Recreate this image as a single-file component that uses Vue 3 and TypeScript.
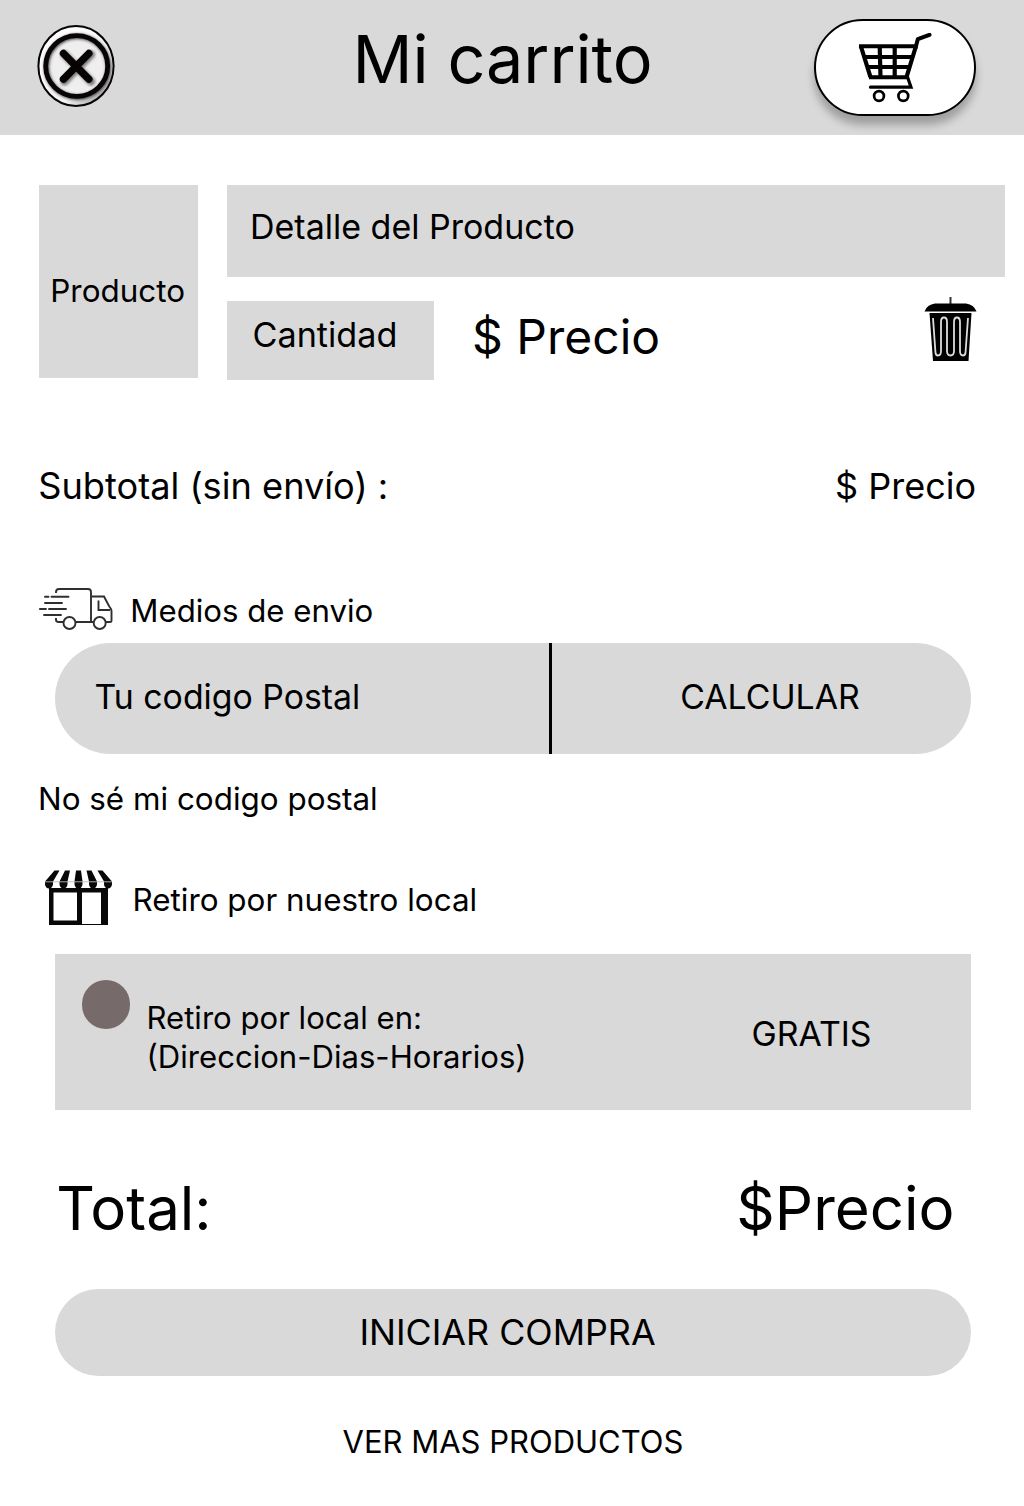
<script setup lang="ts">
interface CartItem {
  name: string
  detail: string
  quantity: string
  price: string
}

interface Stripe {
  top: number
  left: number
}

const item: CartItem = {
  name: 'Producto',
  detail: 'Detalle del Producto',
  quantity: 'Cantidad',
  price: '$ Precio',
}

// Slanted bands of the shop awning, each ending in a rounded lobe.
const stripes: Stripe[] = [
  { top: 9.5, left: 0 },
  { top: 20, left: 14.5 },
  { top: 31, left: 29.5 },
  { top: 41.5, left: 44 },
  { top: 52.5, left: 59 },
]

const band = ({ top, left }: Stripe): string =>
  `M${top} 1.500H${top + 5}L${left + 8} 12.500V15A4 4.500 0 0 1 ${left} 15V12.500Z`
</script>

<template>
  <main class="cart">
    <header class="bar">
      <button class="close" aria-label="Cerrar">
        <svg width="80" height="86" viewBox="0 0 80 86">
          <defs>
            <linearGradient id="rim" x1="0" y1="0" x2="1" y2="1">
              <stop offset="0.15" stop-color="#fff" />
              <stop offset="0.65" stop-color="#f4f4f4" />
              <stop offset="0.9" stop-color="#a5a5a5" />
            </linearGradient>
            <filter id="soft" x="-20%" y="-20%" width="140%" height="140%">
              <feGaussianBlur stdDeviation="1.6" />
            </filter>
          </defs>
          <ellipse cx="40" cy="43" rx="37.6" ry="40" fill="url(#rim)" stroke="#050505" stroke-width="2" />
          <ellipse cx="40.7" cy="43" rx="31" ry="31" fill="#efefef" />
          <ellipse cx="41.500" cy="44" rx="31" ry="30.500" fill="none" stroke="#444" stroke-width="5" filter="url(#soft)" />
          <ellipse cx="40.700" cy="43" rx="31" ry="30.300" fill="none" stroke="#0a0505" stroke-width="4.800" />
          <path d="M28.500 31.500L55 58.500M55 31.500L28.500 58.500" stroke="#777" stroke-width="8" stroke-linecap="round" filter="url(#soft)" />
          <path d="M27.500 30.500L52.800 56.200M52.800 30.500L27.500 56.200" stroke="#080303" stroke-width="7.400" stroke-linecap="round" />
        </svg>
      </button>
      <h1 class="title">Mi carrito</h1>
      <button class="basket" aria-label="Carrito">
        <svg width="76" height="74" viewBox="0 0 76 74" fill="none" stroke="#000">
          <path d="M1 13.300H59M5 24H55M8 34H52M11 44.200H50.500" stroke-width="4" />
          <path d="M2.800 13L12.500 44.200M21.700 13L22.500 44M36.700 13V44M58 13L48.500 44.200" stroke-width="4.200" />
          <path d="M57.500 15L59.800 6.200L71.500 1.800" stroke-width="4" stroke-linecap="round" stroke-linejoin="round" />
          <path d="M49.500 44L53 54.200H12.500" stroke-width="3.200" stroke-linecap="round" />
          <circle cx="21" cy="63" r="4.900" stroke-width="2.700" />
          <circle cx="45.300" cy="63" r="4.900" stroke-width="2.700" />
        </svg>
      </button>
    </header>

    <section class="item">
      <div class="thumb">{{ item.name }}</div>
      <div class="info">
        <div class="detail">{{ item.detail }}</div>
        <div class="line">
          <div class="qty">{{ item.quantity }}</div>
          <span class="price">{{ item.price }}</span>
          <button class="trash" aria-label="Eliminar">
            <svg width="54" height="66" viewBox="0 0 54 66" fill="none">
              <path d="M26.500 0V8" stroke="#333" stroke-width="2" />
              <path d="M0.500 14.500Q3 7.500 11 6.500H42Q50 7.500 52.500 14.500Z" fill="#000" />
              <path d="M5.500 16H47.500L44.500 64H9Z" fill="#000" />
              <path d="M9 21L11.500 56Q12 58.500 14 58.500Q17 58.500 17 54V25Q17 20.500 20 20.500Q23 20.500 23 25V54Q23 58.500 26.500 58.500Q30 58.500 30 54V25Q30 20.500 33 20.500Q36 20.500 36 25V54Q36 58.500 39 58.500Q41 58.500 41.500 56L44 21" stroke="#ddd" stroke-width="1.800" />
            </svg>
          </button>
        </div>
      </div>
    </section>

    <section class="subtotal">
      <span>Subtotal (sin envío) :</span>
      <span class="amount">$ Precio</span>
    </section>

    <section class="shipping">
      <div class="heading">
        <svg class="truck" width="76" height="44" viewBox="0 0 76 44" fill="none" stroke="#302e2f" stroke-width="1.900">
          <path d="M17 6V5Q17 2 20 2H49Q52 2 52 5V35M17 31V33Q17 35 20 35H24.500M37 35H54.500M53 9.500H65L70 19Q72.500 22 72.500 24V34Q72.500 35 71 35H67M59.500 13.500V23H71" />
          <circle cx="30.500" cy="36" r="6" />
          <circle cx="60.700" cy="36" r="6" />
          <path d="M6 9.800H9.500M12.500 9.800H29.500M6 16H23M0.800 22H7M10 22H27M5 28H22" stroke-linecap="round" />
        </svg>
        <span>Medios de envio</span>
      </div>
      <div class="postal">
        <span class="code">Tu codigo Postal</span>
        <button class="calc">CALCULAR</button>
      </div>
      <a class="unknown">No sé mi codigo postal</a>
    </section>

    <section class="pickup">
      <div class="heading store-heading">
        <svg class="store" width="68" height="58" viewBox="0 0 68 58">
          <path d="M4 19H63V56H4Z" fill="#080808" />
          <path d="M8.500 23.500H32V51.500H8.500ZM37 23.500H56V55H37Z" fill="#fff" />
          <path v-for="stripe in stripes" :key="stripe.left" :d="band(stripe)" fill="#080808" />
          <path d="M0 12.800H67" stroke="#bbb" stroke-width="0.900" />
        </svg>
        <span>Retiro por nuestro local</span>
      </div>
      <div class="option">
        <span class="radio"></span>
        <p class="place">Retiro por local en:<br />(Direccion-Dias-Horarios)</p>
        <span class="free">GRATIS</span>
      </div>
    </section>

    <section class="total">
      <span>Total:</span>
      <span>$Precio</span>
    </section>

    <button class="buy">INICIAR COMPRA</button>
    <a class="more">VER MAS PRODUCTOS</a>
  </main>
</template>

<style>
body {
  margin: 0;
  background: #fff;
}
</style>

<style scoped>
.cart {
  display: flex;
  flex-direction: column;
  width: 1024px;
  height: 1506px;
  overflow: hidden;
  box-sizing: border-box;
  font-family: Inter, "Liberation Sans", sans-serif;
  font-size: 31.4px;
  line-height: 38px;
  color: #000;
  white-space: nowrap;
}
.cart * {
  box-sizing: border-box;
}
button {
  margin: 0;
  padding: 0;
  border: 0;
  background: none;
  font: inherit;
  color: inherit;
}
svg {
  display: block;
}
.bar {
  display: flex;
  align-items: flex-start;
  height: 135px;
  background: #d9d9d9;
}
.close {
  margin: 23px 0 0 36px;
}
.title {
  margin: 19px 0 0 236.5px;
  width: 308.5px;
  font-size: 66.5px;
  line-height: 81px;
  font-weight: 400;
}
.basket {
  display: flex;
  align-items: flex-start;
  width: 162px;
  height: 97px;
  margin: 19px 0 0 153px;
  padding: 12px 0 0 42px;
  border: 2px solid #000;
  border-radius: 49px;
  background: #fff;
  box-shadow: 0 9px 9px rgba(0, 0, 0, 0.27);
}
.item {
  display: flex;
  gap: 29px;
  margin: 50.4px 19px 0 38.5px;
}
.thumb {
  width: 159px;
  height: 192.6px;
  padding: 87px 0 0 11.8px;
  background: #d9d9d9;
}
.info {
  flex: 1;
}
.detail {
  height: 91.5px;
  padding: 20.6px 0 0 23.5px;
  background: #d9d9d9;
  font-size: 34px;
  line-height: 42px;
}
.line {
  display: flex;
  margin-top: 24.5px;
}
.qty {
  width: 207px;
  height: 79px;
  padding: 13px 0 0 26px;
  background: #d9d9d9;
  font-size: 34.2px;
  line-height: 42px;
}
.price {
  width: 450.5px;
  margin: 7px 0 0 38.5px;
  font-size: 48px;
  line-height: 58px;
}
.trash {
  align-self: flex-start;
  margin: -4px 0 0 1px;
}
.subtotal {
  display: flex;
  justify-content: space-between;
  margin: 83.5px 48px 0 38.2px;
  font-size: 36.2px;
  line-height: 44px;
}
.amount {
  font-size: 36px;
}
.heading {
  display: flex;
  align-items: flex-start;
}
.shipping {
  margin-top: 79px;
}
.truck {
  margin-left: 39px;
}
.heading span {
  margin: 5px 0 0 15.3px;
  font-size: 31.2px;
}
.postal {
  display: flex;
  width: 916px;
  height: 111px;
  margin: 12px 0 0 55px;
  border-radius: 56px;
  background: #d9d9d9;
  font-size: 33.8px;
  line-height: 42px;
}
.code {
  width: 494px;
  padding: 33px 0 0 39.5px;
}
.calc {
  flex: 1;
  padding: 0 0 3px 17px;
  border-left: 3px solid #000;
}
.unknown {
  display: block;
  margin: 26px 0 0 38px;
}
.pickup {
  margin-top: 51px;
}
.store {
  margin-left: 45px;
}
.heading.store-heading span {
  margin: 12px 0 0 19.5px;
  font-size: 31.4px;
}
.option {
  display: flex;
  width: 916px;
  height: 156.5px;
  margin: 27px 0 0 55px;
  background: #d9d9d9;
}
.radio {
  width: 48.5px;
  height: 48.5px;
  margin: 26.5px 0 0 26.5px;
  border-radius: 50%;
  background: #766b6a;
}
.place {
  width: 605px;
  margin: 45.3px 0 0 16.5px;
  font-size: 31.1px;
  line-height: 38.5px;
}
.free {
  margin-top: 59px;
  font-size: 33.8px;
  line-height: 42px;
}
.total {
  display: flex;
  justify-content: space-between;
  margin: 60.8px 69.5px 0 56.2px;
  font-size: 60px;
  line-height: 74px;
}
.buy {
  width: 916px;
  height: 86.5px;
  margin: 44.2px 0 0 55px;
  padding: 0 11px 2px 0;
  flex: none;
  border-radius: 44px;
  background: #d9d9d9;
  font-size: 35.8px;
}
.more {
  margin: 47.5px 0 0 2px;
  font-size: 31px;
  text-align: center;
}
</style>
